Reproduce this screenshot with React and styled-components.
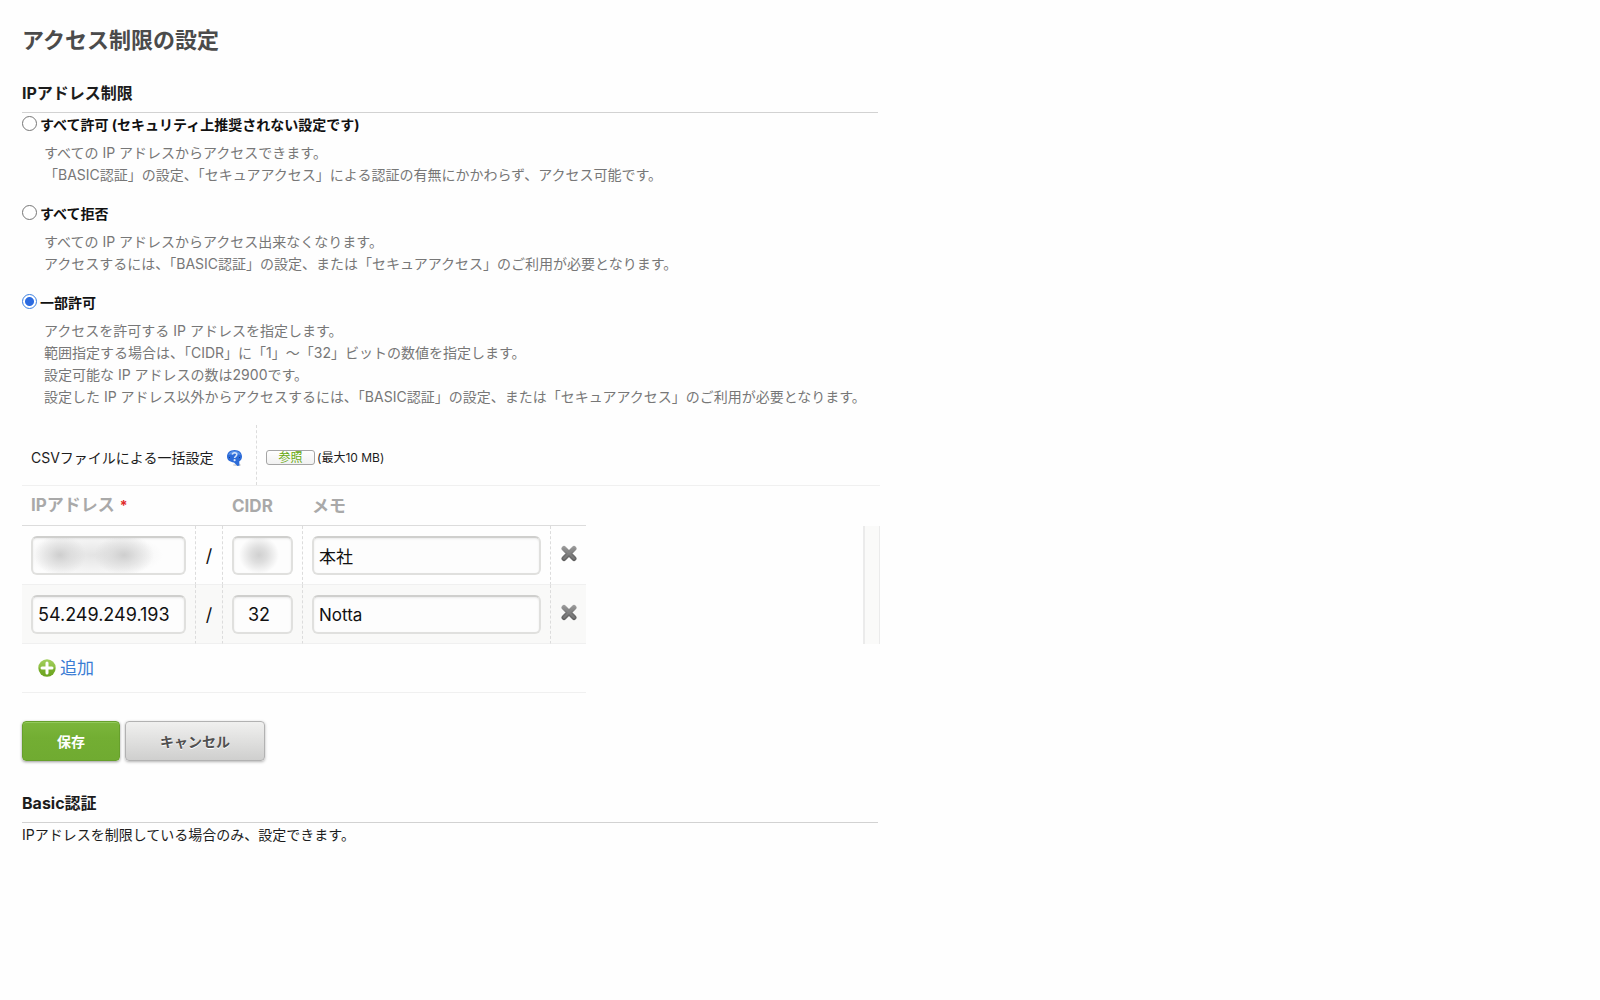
import React, { useState } from 'react'
import styled, { createGlobalStyle } from 'styled-components'

const GlobalStyle = createGlobalStyle`
    * {
        box-sizing: border-box;
    }

    body {
        margin: 0;
        background: #fefefe;
        color: #1c1c1c;
        font-family: Inter, "Noto Sans CJK JP", sans-serif;
        font-size: 14px;
        line-height: 22px;
    }
`

const Page = styled.main`
    max-width: 902px;
    padding: 24px 22px;
`

const Title = styled.h1`
    margin: 0 0 25px;
    color: #4b4b4b;
    font-size: 22px;
    line-height: 32px;
`

const Heading = styled.h2`
    margin: 0 2px 1px 0;
    padding-bottom: 7px;
    border-bottom: 1px solid #d2d2d2;
    color: #1c1c1c;
    font-size: 16px;
    line-height: 24px;
`

const Option = styled.div`
    margin-bottom: 17px;
`

const OptionLabel = styled.label`
    display: flex;
    gap: 3px;
    color: #111;
    font-weight: bold;
`

const Radio = styled.input`
    appearance: none;
    flex: none;
    width: 15px;
    height: 15px;
    margin: 2px 0 0;
    border: 1px solid #767676;
    border-radius: 50%;
    background: #fff;

    &:checked {
        border-color: #3b7fe0;
        background: radial-gradient(circle, #2c6be0 4px, #fff 5px);
    }
`

const Description = styled.p`
    margin: 6px 0 0 22px;
    color: #777;
`

const CsvRow = styled.div`
    display: flex;
    align-items: stretch;
    border-bottom: 1px solid #f0f0f0;
`

const CsvLabel = styled.div`
    display: flex;
    align-items: center;
    justify-content: space-between;
    width: 235px;
    height: 60px;
    padding: 6px 13px 0 9px;
    border-right: 1px dashed #dcdcdc;
`

const CsvField = styled.div`
    display: flex;
    align-items: center;
    gap: 2px;
    padding: 5px 9px 0;
    font-size: 12px;
`

const IconButton = styled.button`
    display: block;
    padding: 0;
    border: none;
    background: none;
    cursor: pointer;

    svg {
        display: block;
    }
`

const BrowseButton = styled.button`
    width: 49px;
    height: 15px;
    padding: 0;
    border: 1px solid #a5a5a5;
    border-radius: 3px;
    background: linear-gradient(#fff, #f1f1f1);
    color: #67a80f;
    font-family: inherit;
    font-size: 12px;
    line-height: 12px;
`

const Table = styled.table`
    width: 564px;
    table-layout: fixed;
    border-collapse: separate;
    border-spacing: 0;
`

const HeadCell = styled.th`
    height: 40px;
    padding: 0 0 0 9px;
    border-bottom: 1px solid #dcdcdc;
    color: #a9a9a9;
    font-size: 17px;
    text-align: left;
`

const Required = styled.span`
    margin-left: 5px;
    color: #e02b2b;
    font-size: 14px;
`

const ScrollArea = styled.div`
    display: flex;
    justify-content: space-between;
`

const ScrollTrack = styled.div`
    width: 17px;
    border: solid #ebebeb;
    border-width: 0 1px 0 2px;
    background: #fafaf9;
`

const Row = styled.tr`
    &:nth-child(even) {
        background: #f9f9f8;
    }
`

const Cell = styled.td`
    height: 59px;
    padding: 10px 9px 9px;
    border-right: 1px dashed #dcdcdc;
    border-bottom: 1px solid #f0f0f0;

    &:last-child {
        padding: 0 9px 4px;
        border-right: none;
    }
`

const SlashCell = styled(Cell)`
    padding: 2px 0 0;
    color: #111;
    font-size: 18px;
    text-align: center;
`

const TextBox = styled.input`
    display: block;
    width: 100%;
    height: 39px;
    padding: 0 5px;
    border: 2px solid #e0e0de;
    border-top-color: #cfcfcd;
    border-radius: 6px;
    background: #fdfdfd;
    box-shadow: inset 0 1px 2px rgba(0, 0, 0, 0.08);
    color: #111;
    font-family: inherit;
    font-size: 17px;
`

const NumberBox = styled(TextBox)`
    font-size: 18px;
    text-align: ${props => (props.$short ? 'center' : 'left')};
    ${props => props.$short && 'padding-right: 12px;'}
`

/* the stored value is hidden behind a soft smudge */
const MaskedBox = styled(NumberBox)`
    background: ${props =>
        props.$short
            ? 'radial-gradient(ellipse 20px 19px at 25px 17px, #d0d0d0, #dedede 40%, #fdfdfd)'
            : `radial-gradient(ellipse 26px 20px at 27px 17px, #cecece, rgba(210, 210, 210, 0.6) 40%, transparent),
               radial-gradient(ellipse 30px 20px at 91px 17px, #cecece, rgba(210, 210, 210, 0.6) 40%, transparent),
               radial-gradient(ellipse 70px 24px at 60px 17px, #e4e4e4, #fdfdfd)`};
`

const AddRow = styled.div`
    display: flex;
    align-items: center;
    width: 564px;
    height: 49px;
    padding: 0 16px;
    border-bottom: 1px solid #f0f0f0;
`

const AddLink = styled.a`
    display: flex;
    align-items: center;
    gap: 4px;
    color: #3a7dd4;
    font-size: 17px;
    text-decoration: none;
`

const Actions = styled.div`
    display: flex;
    gap: 5px;
    margin: 28px 0 30px;
`

const Button = styled.button`
    height: 40px;
    padding: 0 34px;
    border: 1px solid #b2b2b2;
    border-radius: 4px;
    background: linear-gradient(#f0f0ef, #cfcfce);
    box-shadow: 0 1px 3px rgba(0, 0, 0, 0.3);
    color: #505050;
    font-family: inherit;
    font-size: 14px;
    font-weight: bold;
    text-shadow: 0 1px 0 #fff;
`

const SaveButton = styled(Button)`
    border-color: #67a02c;
    background: linear-gradient(#7cb63c, #73ae33 40%, #70ab31);
    box-shadow: inset 0 1px 0 #92c95c, 0 1px 3px rgba(0, 0, 0, 0.4);
    color: #fff;
    text-shadow: none;
`

const Note = styled.p`
    margin: 0;
`

const HelpIcon = () => (
    <svg width="17" height="18" viewBox="0 0 17 18" aria-hidden="true">
        <ellipse cx="11" cy="16" rx="4" ry="1" fill="#d5d5d5" />
        <path d="M8.5 1C4 1 1 3.8 1 7.500S4 13 8 13.500l3.500 3.500 2-.500-.3-4C15 11.500 16 9.700 16 7.500 16 3.800 13 1 8.500 1z" fill="#2c6bd8" />
        <path d="M8.500 2C5.500 2 3 3.500 2.300 6c3-1.500 9-1.500 12.400 0C14 3.500 11.500 2 8.500 2z" fill="#5a92e8" />
        <path d="M6.300 5.700c.2-1.400 1.100-2 2.300-2 1.300 0 2.200.7 2.200 1.900 0 1.700-2.200 1.700-2.200 3.400" fill="none" stroke="#d6e4fa" strokeWidth="1.600" />
        <circle cx="8.600" cy="11.200" r="1.100" fill="#d6e4fa" />
        <path d="M3 8h1v1H3zM13 8h1v1h-1z" fill="#1d3f86" />
    </svg>
)

const PlusIcon = () => (
    <svg width="18" height="18" viewBox="0 0 18 18" aria-hidden="true">
        <defs>
            <linearGradient id="plus" x1="0" y1="0" x2="0" y2="1">
                <stop offset="0" stopColor="#a3cf5e" />
                <stop offset="0.45" stopColor="#8fc044" />
                <stop offset="0.55" stopColor="#78ae2c" />
                <stop offset="1" stopColor="#6ca41f" />
            </linearGradient>
        </defs>
        <circle cx="9" cy="9" r="8.700" fill="url(#plus)" />
        <path d="M9 4v10M4 9h10" stroke="#fff" strokeWidth="3" strokeLinecap="round" />
    </svg>
)

const RemoveIcon = () => (
    <svg width="17" height="17" viewBox="0 0 17 17" aria-hidden="true">
        <defs>
            <linearGradient id="cross" x1="0" y1="0" x2="0" y2="17" gradientUnits="userSpaceOnUse">
                <stop offset="0" stopColor="#a8a8a8" />
                <stop offset="0.6" stopColor="#6e6e6e" />
                <stop offset="1" stopColor="#5e5e5e" />
            </linearGradient>
        </defs>
        <path d="M4 3.500l10 10M14 3.500l-10 10" stroke="url(#cross)" strokeWidth="5" strokeLinecap="round" />
        <path d="M4 3.500l10 10M14 3.500l-10 10" stroke="#8e8e8e" strokeWidth="2" strokeLinecap="round" opacity="0.5" />
    </svg>
)

const options = [
    {
        id: 'allow',
        label: 'すべて許可 (セキュリティ上推奨されない設定です)',
        lines: [
            'すべての IP アドレスからアクセスできます。',
            '「BASIC認証」の設定、「セキュアアクセス」による認証の有無にかかわらず、アクセス可能です。',
        ],
    },
    {
        id: 'deny',
        label: 'すべて拒否',
        lines: [
            'すべての IP アドレスからアクセス出来なくなります。',
            'アクセスするには、「BASIC認証」の設定、または「セキュアアクセス」のご利用が必要となります。',
        ],
    },
    {
        id: 'partial',
        label: '一部許可',
        lines: [
            'アクセスを許可する IP アドレスを指定します。',
            '範囲指定する場合は、「CIDR」に「1」〜「32」ビットの数値を指定します。',
            '設定可能な IP アドレスの数は2900です。',
            '設定した IP アドレス以外からアクセスするには、「BASIC認証」の設定、または「セキュアアクセス」のご利用が必要となります。',
        ],
    },
]

const addresses = [
    { masked: true, memo: '本社' },
    { ip: '54.249.249.193', cidr: '32', memo: 'Notta' },
]

const Columns = () => (
    <colgroup>
        <col width="174" />
        <col width="27" />
        <col width="80" />
        <col width="248" />
        <col width="35" />
    </colgroup>
)

const AddressRow = ({ ip, cidr, memo, masked }) => {
    const Box = masked ? MaskedBox : NumberBox
    return (
        <Row>
            <Cell><Box aria-label="IPアドレス" defaultValue={ip} /></Cell>
            <SlashCell>/</SlashCell>
            <Cell><Box $short aria-label="CIDR" defaultValue={cidr} /></Cell>
            <Cell><TextBox aria-label="メモ" defaultValue={memo} /></Cell>
            <Cell><IconButton type="button" aria-label="削除"><RemoveIcon /></IconButton></Cell>
        </Row>
    )
}

const App = () => {
    const [mode, setMode] = useState('partial')

    return (
        <Page>
            <GlobalStyle />
            <Title>アクセス制限の設定</Title>

            <Heading>IPアドレス制限</Heading>
            {options.map(option => (
                <Option key={option.id}>
                    <OptionLabel>
                        <Radio
                            type="radio"
                            name="mode"
                            checked={mode === option.id}
                            onChange={() => setMode(option.id)}
                        />
                        {option.label}
                    </OptionLabel>
                    <Description>
                        {option.lines.map(line => (
                            <React.Fragment key={line}>{line}<br /></React.Fragment>
                        ))}
                    </Description>
                </Option>
            ))}

            <CsvRow>
                <CsvLabel>
                    <span id="csv-label">CSVファイルによる一括設定</span>
                    <IconButton type="button" aria-label="ヘルプ"><HelpIcon /></IconButton>
                </CsvLabel>
                <CsvField>
                    <BrowseButton type="button" aria-describedby="csv-label">参照</BrowseButton>
                    <span>(最大10 MB)</span>
                </CsvField>
            </CsvRow>

            <Table>
                <Columns />
                <thead>
                    <tr>
                        <HeadCell colSpan={2}>IPアドレス<Required>*</Required></HeadCell>
                        <HeadCell>CIDR</HeadCell>
                        <HeadCell colSpan={2}>メモ</HeadCell>
                    </tr>
                </thead>
            </Table>
            <ScrollArea>
                <Table>
                    <Columns />
                    <tbody>
                        {addresses.map(address => (
                            <AddressRow key={address.memo} {...address} />
                        ))}
                    </tbody>
                </Table>
                <ScrollTrack />
            </ScrollArea>
            <AddRow>
                <AddLink href="#add"><PlusIcon />追加</AddLink>
            </AddRow>

            <Actions>
                <SaveButton type="submit">保存</SaveButton>
                <Button type="button">キャンセル</Button>
            </Actions>

            <Heading>Basic認証</Heading>
            <Note>IPアドレスを制限している場合のみ、設定できます。</Note>
        </Page>
    )
}

export default App
